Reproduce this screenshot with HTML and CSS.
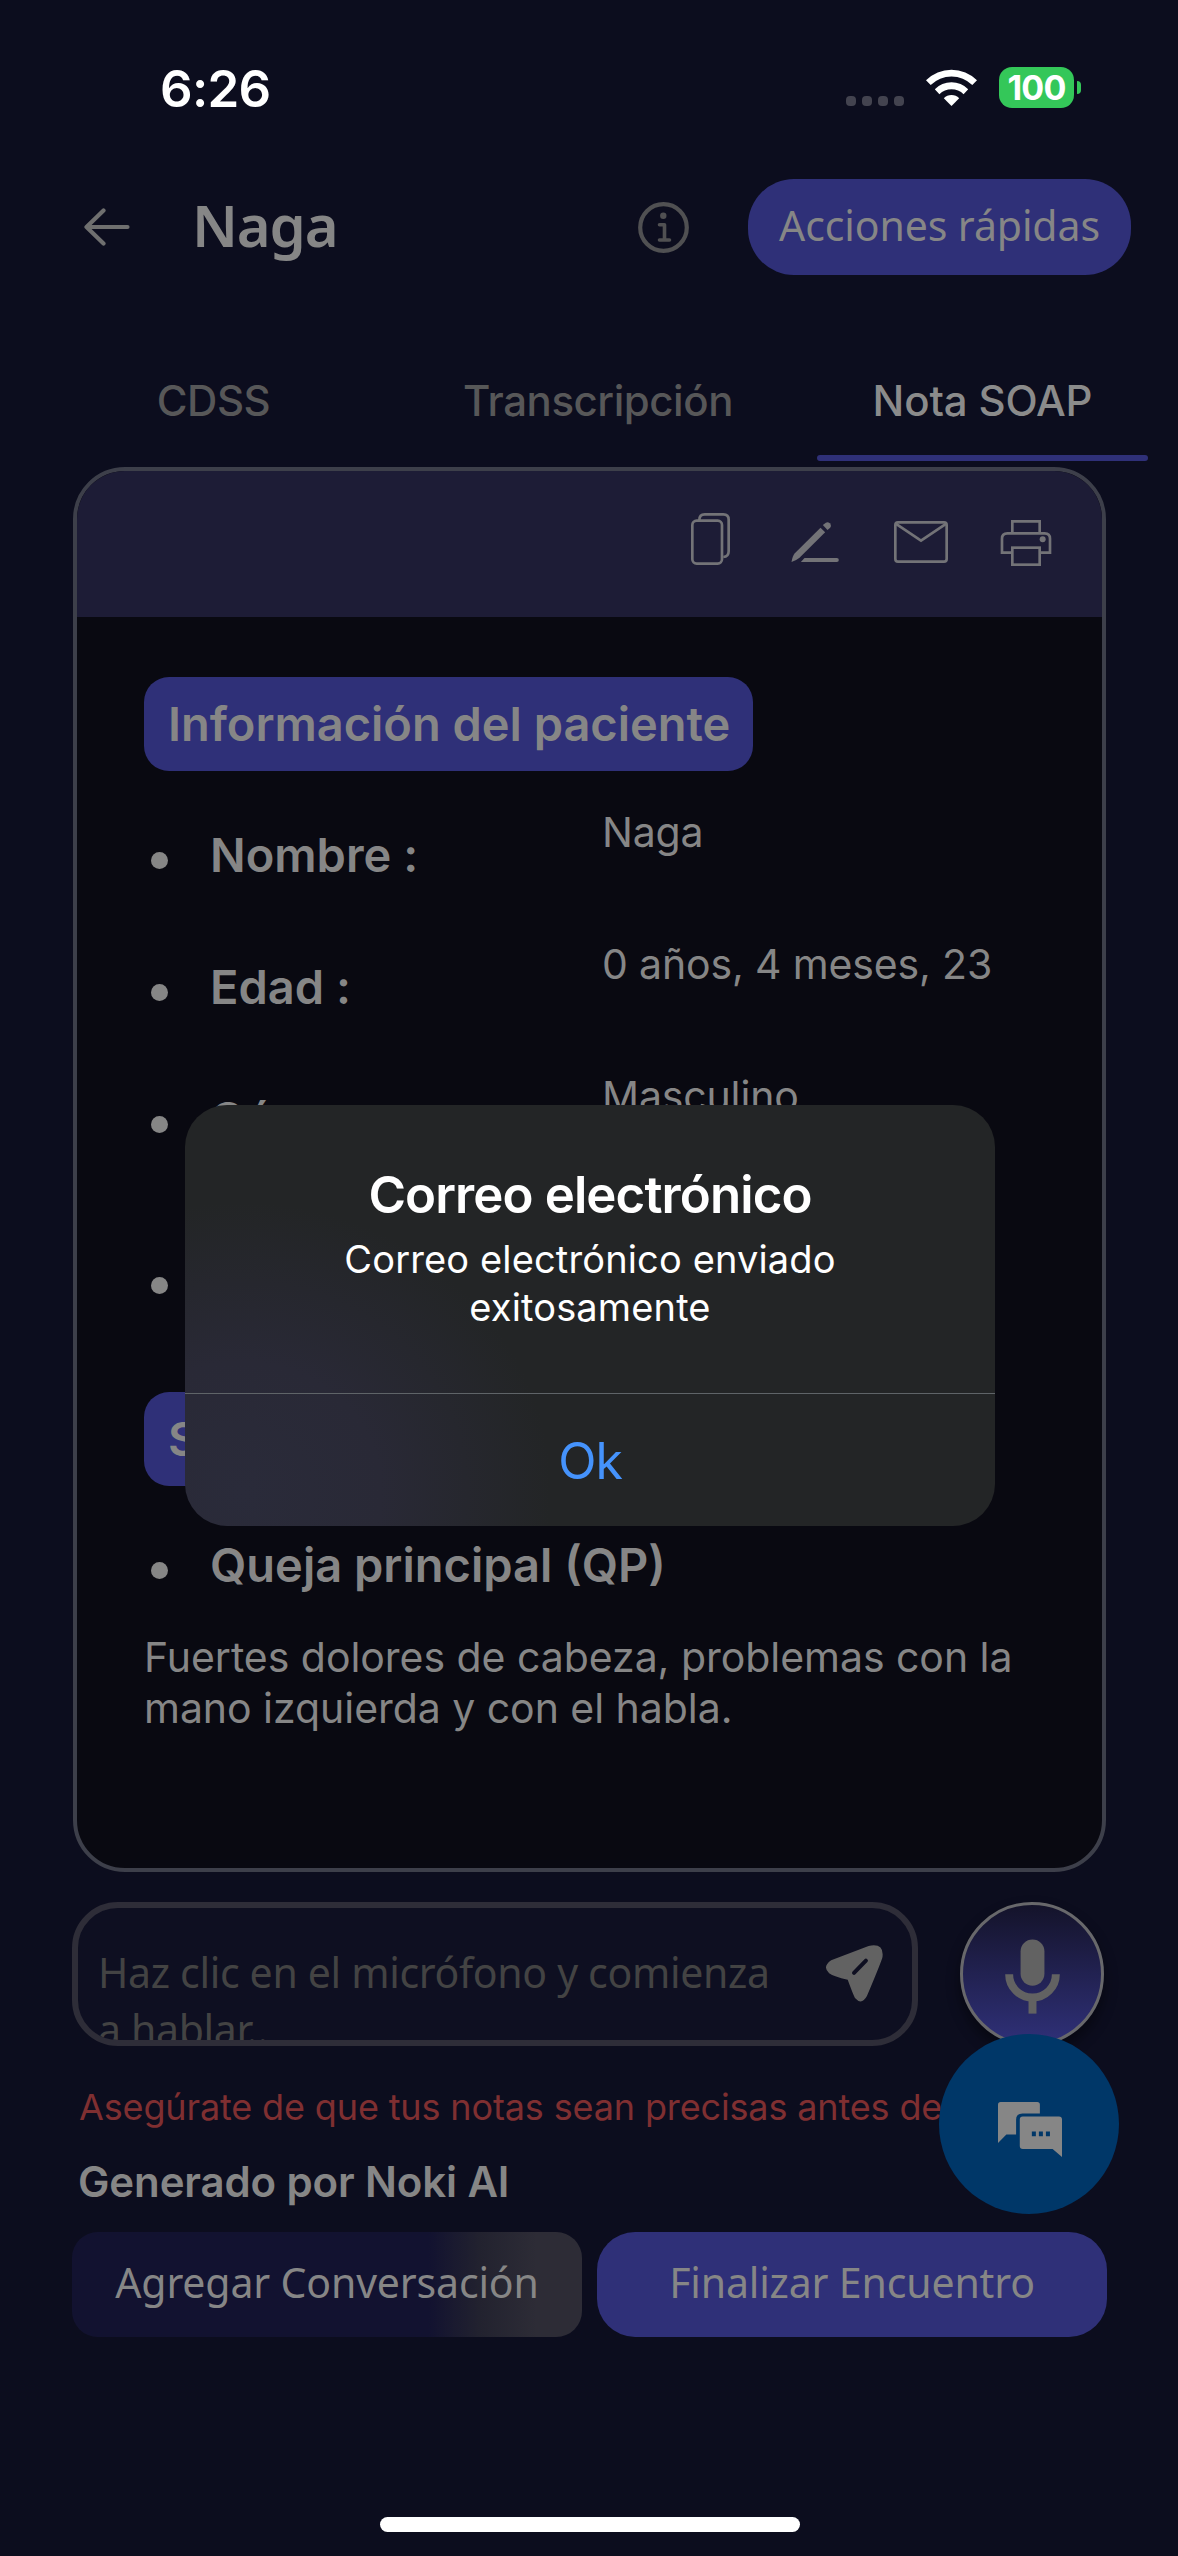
FILE: index.html
```
<!DOCTYPE html>
<html lang="es">
<head>
<meta charset="utf-8">
<title>Nota SOAP</title>
<link rel="stylesheet" href="styles.css">
</head>
<body>
<div class="screen">
  <div class="status">
    <span class="time">6:26</span>
    <div class="signal"><i></i><i></i><i></i><i></i></div>
    <svg class="wifi" viewBox="0 0 51 37" width="51" height="37" fill="#fff">
      <path d="M0 11.3A36 36 0 0 1 51 11.3L46.3 16A29.5 29.5 0 0 0 4.7 16Z"/>
      <path d="M8.8 20.3A23.3 23.3 0 0 1 42.2 20.3L37.6 25.2A17 17 0 0 0 13.4 25.2Z"/>
      <path d="M17.8 29.2A11 11 0 0 1 33.2 29.2L25.5 37Z"/>
    </svg>
    <div class="battery">100</div>
    <div class="battery-tip"></div>
  </div>

  <header class="header">
    <svg class="back" viewBox="0 0 46 38" width="46" height="38" fill="none" stroke="#6f6f6f" stroke-width="4.2" stroke-linecap="round" stroke-linejoin="round">
      <path d="M43.5 19H3M19.5 2.5L2.5 19L19.5 35.5"/>
    </svg>
    <h1 class="title">Naga</h1>
    <svg class="info" viewBox="0 0 51 51" width="51" height="51" fill="none" stroke="#505052" stroke-width="4.2" stroke-linecap="round" stroke-linejoin="round">
      <circle cx="25.5" cy="25.5" r="23.3"/>
      <path d="M21.5 22.8H26.5V38M21.5 38H31.5" stroke-width="3.6"/>
      <circle cx="25.3" cy="13.7" r="3.2" fill="#505052" stroke="none"/>
    </svg>
    <button class="quick">Acciones rápidas</button>
  </header>

  <nav class="tabs">
    <div class="tab">CDSS</div>
    <div class="tab">Transcripción</div>
    <div class="tab tab-active">Nota SOAP<span class="indicator"></span></div>
  </nav>

  <main class="card">
    <div class="toolbar">
      <svg class="ic-copy" viewBox="93 69 117 156" width="39" height="52" fill="none" stroke="#737377" stroke-width="8">
        <rect x="97" y="92" width="89" height="129" rx="13"/>
        <path d="M118 90Q118 73 134 73H190Q206 73 206 89V184Q206 200 190 201"/>
      </svg>
      <svg class="ic-edit" viewBox="394 96 143 120" width="48" height="40" fill="#737377">
        <path d="M482 113L496 127L419 203Q411 210 395 216Q398 198 405 190Z"/>
        <path d="M489 105L498 98Q504 94 510 100Q516 107 511 113L503 120Z"/>
        <path d="M423 216L434 204H531Q537 204 537 210T531 216Z"/>
      </svg>
      <svg class="ic-mail" viewBox="702 93 162 126" width="54" height="42" fill="none" stroke="#737377" stroke-width="8">
        <rect x="706" y="97" width="154" height="118" rx="8"/>
        <path d="M707 101L783 152L859 101"/>
      </svg>
      <svg class="ic-print" viewBox="1020 90 156 138" width="52" height="46" fill="none" stroke="#737377" stroke-width="8">
        <path d="M1057 130V94H1139V130M1057 188H1026V146Q1026 130 1042 130H1154Q1170 130 1170 146V188H1139"/>
        <rect x="1057" y="173" width="82" height="51"/>
        <circle cx="1148" cy="148" r="9" fill="#737377" stroke="none"/>
      </svg>
    </div>
    <div class="note">
      <h2 class="badge">Información del paciente</h2>
      <ul class="fields">
        <li class="field"><i class="dot"></i><b class="label">Nombre :</b><span class="value">Naga</span></li>
        <li class="field"><i class="dot"></i><b class="label">Edad :</b><span class="value">0 años, 4 meses, 23</span></li>
        <li class="field field-tall"><i class="dot"></i><b class="label">Género :</b><span class="value">Masculino</span></li>
        <li class="field field-tall"><i class="dot"></i></li>
      </ul>
      <h2 class="badge badge-short">Subjetivo</h2>
      <ul class="fields complaint">
        <li class="field"><i class="dot"></i><b class="label">Queja principal (QP)</b></li>
      </ul>
      <p class="text">Fuertes dolores de cabeza, problemas con la mano izquierda y con el habla.</p>
    </div>
  </main>

  <div class="composer">
    <div class="input">
      <p class="placeholder">Haz clic en el micrófono y comienza a hablar..</p>
      <svg class="send" viewBox="254 196 174 172" width="58" height="57">
        <path fill="#626262" d="M272 242L385 199Q432 189 427 232Q425 243 380 350Q364 379 344 356Q340 350 322 301Q280 291 266 281Q244 262 272 242Z"/>
        <path stroke="#0e0f21" stroke-width="12" stroke-linecap="round" d="M341 280L377 243"/>
      </svg>
    </div>
    <div class="mic">
      <svg viewBox="793 178 166 224" width="55" height="75">
        <rect x="840" y="178" width="72" height="140" rx="36" fill="#626262"/>
        <path d="M805.5 283A70.5 70.5 0 0 0 946.5 283" fill="none" stroke="#626262" stroke-width="24"/>
        <rect x="864" y="358" width="24" height="44" fill="#626262"/>
      </svg>
    </div>
  </div>
  <p class="notice">Asegúrate de que tus notas sean precisas antes de</p>
  <p class="credit">Generado por Noki AI</p>
  <div class="actions">
    <button class="action action-add">Agregar Conversación</button>
    <button class="action action-end">Finalizar Encuentro</button>
  </div>
  <div class="home"></div>

  <div class="fab">
    <svg viewBox="775 666 191 164" width="64" height="55" fill="#868686">
      <path d="M775 788V674Q775 666 783 666H892Q900 666 900 674V700H848Q829 700 829 719V763H800Z"/>
      <path fill-rule="evenodd" d="M849 709H957Q966 709 966 718V830L938 806H849Q840 806 840 797V718Q840 709 849 709ZM876 754V768H888V754ZM897 754V768H909V754ZM918 754V768H930V754Z"/>
    </svg>
  </div>

  <div class="alert">
    <div class="alert-body">
      <h3 class="alert-title">Correo electrónico</h3>
      <p class="alert-text">Correo electrónico enviado exitosamente</p>
    </div>
    <button class="alert-ok">Ok</button>
  </div>
</div>
</body>
</html>
```
FILE: styles.css
```
* { box-sizing: border-box; margin: 0; padding: 0; }
body { background: #0c0d1e; }
button { border: 0; background: none; color: inherit; font: inherit; }
ul { list-style: none; }
svg { display: block; flex: none; }

.screen {
  position: relative;
  width: 1178px;
  height: 2556px;
  overflow: hidden;
  background: #0c0d1e;
  color: #868686;
  font-family: Inter, "Liberation Sans", sans-serif;
  display: flex;
  flex-direction: column;
}

/* status bar */
.status { display: flex; align-items: center; height: 175px; padding: 0 97px 0 160px; color: #fff; flex: none; }
.time { font-size: 51px; font-weight: 600; letter-spacing: -0.7px; margin: 1px auto 0 0; }
.signal { display: flex; gap: 6px; margin: 27px 22px 0 0; }
.signal i { width: 10px; height: 10px; border-radius: 4px; background: #43434f; }
.wifi { margin-right: 22px; }
.battery {
  width: 75px; height: 41px; border-radius: 13px; background: #34c759;
  font-size: 34px; font-weight: 700; letter-spacing: -0.8px; line-height: 41px; text-align: center;
}
.battery-tip { width: 4px; height: 13px; margin-left: 3px; border-radius: 0 4px 4px 0; background: #34c759; }

/* header */
.header { display: flex; align-items: center; height: 96px; margin-top: 4px; padding: 0 47px 0 84px; flex: none; font-family: "Noto Sans", sans-serif; }
.title { font-size: 58px; font-weight: 600; letter-spacing: -1.2px; line-height: 70px; margin: -4px auto 0 62px; }
.info { margin-right: 59px; }
.quick { width: 383px; height: 96px; padding-bottom: 4px; border-radius: 46px; background: #2f3078; font-size: 41px; letter-spacing: -0.1px; }

/* tabs */
.tabs { display: grid; grid-template-columns: repeat(3, 331px); column-gap: 53.5px; height: 120px; margin: 66px 0 0 48px; flex: none; }
.tab {
  display: grid; grid-template-rows: 108px 6px; padding-top: 6px; line-height: 108px;
  text-align: center; color: #575758; font-size: 42px; font-weight: 500; letter-spacing: -0.45px; white-space: nowrap;
}
.tab-active { color: #8b8b8b; letter-spacing: -0.15px; }
.indicator { border-radius: 3px; background: #2f3078; }

/* note card */
.card { width: 1033px; height: 1405px; margin: 6px 0 0 73px; border: 4px solid #3d3f4a; border-radius: 52px; overflow: hidden; background: #090911; flex: none; }
.toolbar { display: flex; align-items: flex-start; height: 146px; padding: 42px 50px 0 0; justify-content: flex-end; background: #1d1c36; }
.ic-edit { margin: 9px 0 0 61px; }
.ic-mail { margin: 8px 0 0 55px; }
.ic-print { margin: 7px 0 0 52px; }
.note { padding: 60px 67px 0; }
.badge { width: 609px; height: 94px; padding-left: 24px; border-radius: 25px; background: #2f3078; font-size: 47px; font-weight: 600; line-height: 94px; letter-spacing: -0.03px; white-space: nowrap; }
.badge-short { width: 320px; }
.fields { margin-top: 35px; }
.field { display: grid; grid-template-columns: 66px 392px 1fr; height: 132px; }
.field-tall { height: 161px; }
.dot { width: 17px; height: 17px; margin: 46px 0 0 7px; border-radius: 50%; background: #868686; }
.label { font-size: 47px; font-weight: 600; line-height: 56px; margin-top: 21px; white-space: nowrap; }
.value { margin-top: 1px; font-size: 41px; line-height: 51px; letter-spacing: -0.15px; white-space: nowrap; }
.complaint { margin-top: 30px; }
.complaint .field { height: 116px; }
.text { font-size: 41px; line-height: 51px; letter-spacing: -0.04px; width: 890px; }

/* composer */
.composer { display: flex; gap: 42px; margin: 30px 0 0 72px; height: 144px; flex: none; }
.input { display: flex; gap: 31px; width: 846px; padding: 36px 0 0 20px; border: 6px solid #2e2d38; border-radius: 46px; background: #0e0f21; overflow: hidden; }
.placeholder { width: 696px; flex: none; font: 400 41px/57px "Noto Sans", sans-serif; letter-spacing: -0.32px; color: #434343; }
.send { margin-top: 1px; }
.mic {
  display: flex; align-items: center; justify-content: center; width: 144px; padding-top: 5px;
  border: 3px solid #68686b; border-radius: 50%; background: linear-gradient(#14132a, #2f3078);
  box-shadow: 0 8px 14px rgba(0, 0, 0, 0.45);
}
.notice { margin: 37px 0 0 79px; font-size: 36px; line-height: 48px; letter-spacing: -0.14px; color: #7f2f31; white-space: nowrap; flex: none; }
.credit { margin: 26px 0 0 78px; font-size: 42px; font-weight: 600; line-height: 50px; letter-spacing: -0.12px; flex: none; }
.actions { display: flex; gap: 15px; height: 105px; margin: 25px 0 0 72px; flex: none; }
.action { width: 510px; padding-bottom: 5px; font: 400 41px "Noto Sans", sans-serif; letter-spacing: -0.15px; }
.action-add { border-radius: 26px; background: linear-gradient(90deg, #121230 70%, #22222f 80%, #2d2c36 91%); }
.action-end { border-radius: 38px; background: #2f3078; }
.home { width: 420px; height: 15px; margin: 180px 0 0 380px; border-radius: 8px; background: #fff; flex: none; }

/* chat button floating over the composer */
.fab { position: absolute; left: 939px; top: 2034px; width: 180px; height: 180px; padding: 68px 0 0 59px; border-radius: 50%; background: #003768; }

/* alert dialog */
.alert {
  position: absolute; left: 185px; top: 1105px; width: 810px; height: 421px;
  display: flex; flex-direction: column; border-radius: 42px; overflow: hidden; color: #fff; text-align: center;
  background: radial-gradient(310px 290px at 7% 92%, #2a2b3a 0, #292936 45%, rgba(35, 37, 38, 0) 100%), #232526;
}
.alert-body { height: 289px; padding: 60px 150px 0; border-bottom: 1px solid #5f6468; }
.alert-title { font-size: 51px; font-weight: 600; line-height: 60px; letter-spacing: -0.9px; white-space: nowrap; }
.alert-text { margin-top: 10px; font-size: 38px; line-height: 48px; letter-spacing: 0.14px; }
.alert-ok { flex: 1; padding-top: 2px; font-size: 50px; letter-spacing: -1px; color: #4593fc; }
```
